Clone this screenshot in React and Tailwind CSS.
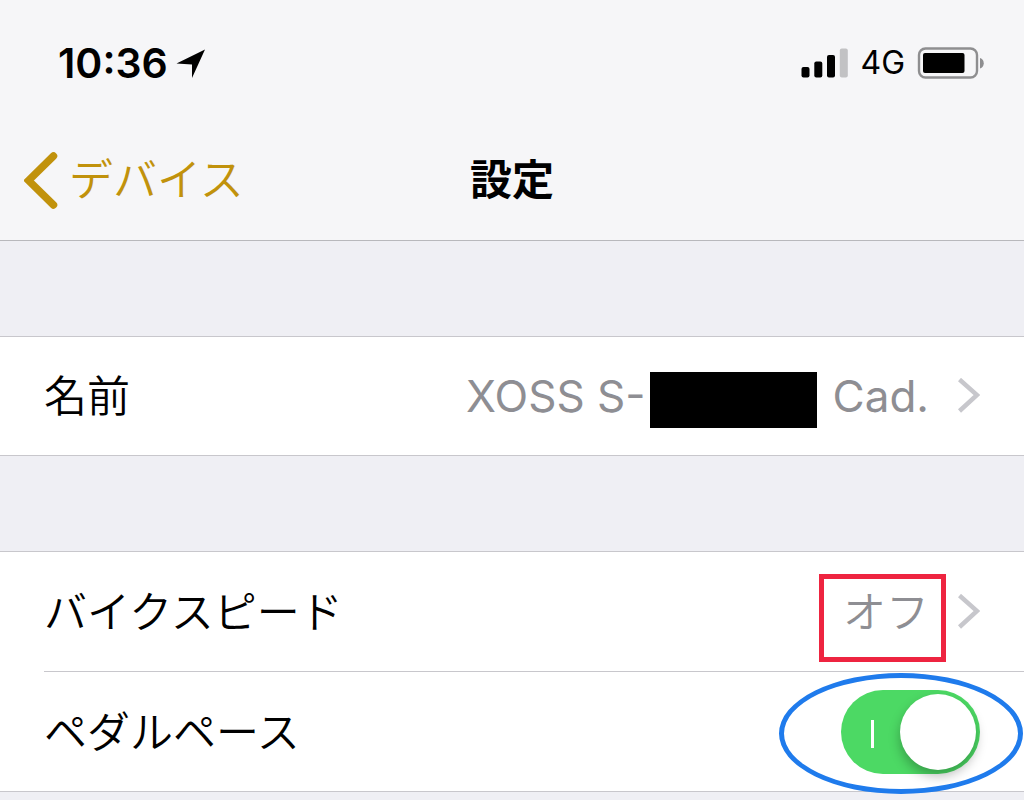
import { useState } from "react";

function StatusBar() {
  return (
    <div className="flex h-[126px] items-center justify-between pr-10 pl-[58px]">
      <div className="flex items-center gap-2">
        <time className="text-[41px] leading-[48px] font-semibold">10:36</time>
        <svg className="h-[30px] w-[30px]" viewBox="0 0 30 30" aria-hidden="true">
          <path d="M29 1.500 16 30V16.500L0.500 15.500Z" fill="#000" />
        </svg>
      </div>
      <div className="flex items-center gap-3">
        <svg className="h-[30px] w-[47px]" viewBox="0 0 47 30" role="img" aria-label="Signal">
          <rect x="0.500" y="19" width="8" height="10.500" rx="2" />
          <rect x="13.300" y="13.500" width="8" height="16" rx="2" />
          <rect x="26" y="7" width="8" height="22.500" rx="2" />
          <rect x="38.800" y="0.500" width="8" height="29" rx="2" fill="#c2c2c4" />
        </svg>
        <span className="text-[32px] leading-[40px]">4G</span>
        <svg className="h-[32px] w-[67px]" viewBox="0 0 67 32" role="img" aria-label="Battery">
          <rect x="2" y="1.500" width="58" height="29" rx="6.500" fill="none" stroke="#8e8e90" strokeWidth="2.400" />
          <rect x="6" y="6" width="41.500" height="20" rx="2" />
          <path d="M63 11c5 1.500 5 9 0 10.500Z" fill="#8e8e90" />
        </svg>
      </div>
    </div>
  );
}

function Chevron() {
  return (
    <svg className="h-[36px] w-[23px] shrink-0" viewBox="0 0 23 36" fill="none" aria-hidden="true">
      <path d="M2.500 1.500 20 17 2.500 33" stroke="#c7c7cc" strokeWidth="4.500" />
    </svg>
  );
}

function Toggle({ id }) {
  const [on, setOn] = useState(true);
  return (
    <span className="relative flex h-[84px] w-[139px]">
      <input
        id={id}
        type="checkbox"
        role="switch"
        checked={on}
        onChange={(e) => setOn(e.target.checked)}
        className="peer h-full w-full cursor-pointer appearance-none rounded-full bg-[#e5e5ea] checked:bg-[#4cd964]"
      />
      <span className="pointer-events-none absolute top-[30px] left-[30px] h-7 w-[3px] bg-white" />
      <span className="pointer-events-none absolute top-1 left-1 h-[76px] w-[76px] rounded-full bg-white shadow-[0_6px_12px_rgba(0,0,0,0.28)] peer-checked:left-[59px]" />
      <span className="pointer-events-none absolute -top-[17px] -right-[43px] -bottom-5 -left-[62px] rounded-[50%] border-[5px] border-[#1f7bec]" />
    </span>
  );
}

export default function App() {
  return (
    <div className="min-h-screen bg-[#efeff4] font-['Inter','Noto_Sans_CJK_JP',sans-serif] text-black">
      <header className="border-b border-[#b8b8bc] bg-[#f6f6f8]">
        <StatusBar />
        <nav className="grid h-[114px] grid-cols-[1fr_auto_1fr] items-start px-6">
          <a href="#devices" className="flex items-center gap-[10px] justify-self-start pt-6 text-[#c1920c]">
            <svg className="h-[60px] w-[35px]" viewBox="0 0 35 60" fill="none" aria-hidden="true">
              <path d="M29.500 6 4.500 30.500 29.500 55" stroke="currentColor" strokeWidth="7.500" strokeLinecap="round" />
            </svg>
            <span className="text-[44px] leading-[60px] font-[350]">デバイス</span>
          </a>
          <h1 className="pt-6 text-[42px] leading-[60px] font-bold">設定</h1>
        </nav>
      </header>

      <main className="flex flex-col gap-[95px] pt-[95px] text-[43px] leading-[60px]">
        <section className="border-y border-[#c8c7cc] bg-white">
          <a href="#name" className="flex h-[118px] items-center justify-between px-11">
            <span className="font-[350]">名前</span>
            <span className="flex items-center gap-7">
              <span className="flex items-center text-[44px] text-[#8e8e93]">
                XOSS S-
                <span className="mt-2 mr-4 ml-1 h-14 w-[167px] bg-black" />
                Cad.
              </span>
              <Chevron />
            </span>
          </a>
        </section>

        <section className="border-y border-[#c8c7cc] bg-white">
          <div className="pl-11">
            <a href="#bike-speed" className="flex h-[120px] items-center justify-between border-b border-[#c8c7cc] pr-11">
              <span className="text-[43px] font-[350]">バイクスピード</span>
              <span className="flex items-center gap-7">
                <span className="relative font-[350] text-[#8e8e93]">
                  オフ
                  <span className="absolute -top-2 -right-[17px] -bottom-5 -left-6 border-[5px] border-[#ee2440]" />
                </span>
                <Chevron />
              </span>
            </a>
            <div className="flex h-[119px] items-center justify-between pr-11">
              <label htmlFor="pedal-pace" className="text-[43px] font-[350]">ペダルペース</label>
              <Toggle id="pedal-pace" />
            </div>
          </div>
        </section>
      </main>
    </div>
  );
}
